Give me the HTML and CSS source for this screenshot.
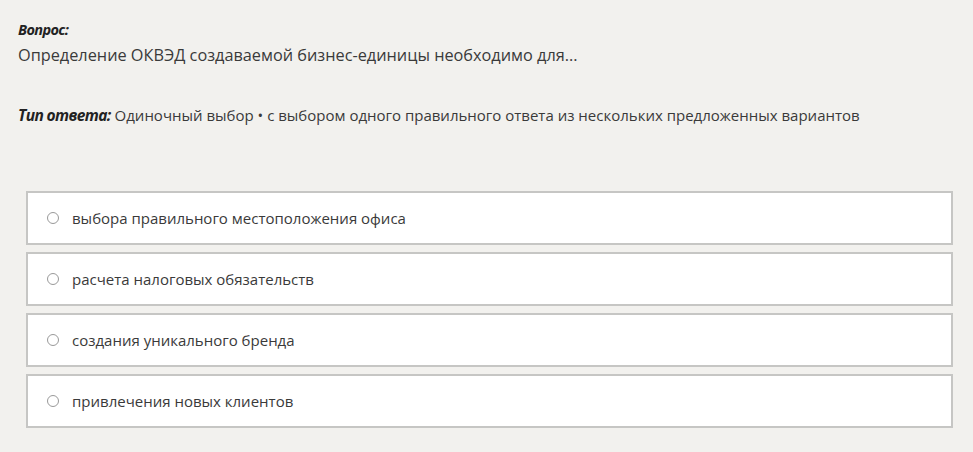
FILE: index.html
```html
<!DOCTYPE html>
<html>
<head>
    <meta charset="utf-8">
    <title>Вопрос</title>
    <link rel="stylesheet" href="styles.css">
</head>
<body>
    <div class="question">
        <div class="label">Вопрос:</div>
        <div class="question-text">Определение ОКВЭД создаваемой бизнес-единицы необходимо для...</div>

        <p class="answer-type"><span class="label">Тип ответа:</span> Одиночный выбор • с выбором одного правильного ответа из нескольких предложенных вариантов</p>

        <div class="options">
            <label class="option"><span class="radio"></span>выбора правильного местоположения офиса</label>
            <label class="option"><span class="radio"></span>расчета налоговых обязательств</label>
            <label class="option"><span class="radio"></span>создания уникального бренда</label>
            <label class="option"><span class="radio"></span>привлечения новых клиентов</label>
        </div>
    </div>
</body>
</html>
```

FILE: styles.css
```css
body { margin: 0; background: #f2f1ee; font-family: "Open Sans", "Noto Sans", sans-serif; color: #3a3a3a; }
.question { padding: 20px 20px 0 18px; }
.label { font-weight: bold; font-style: italic; font-size: 14.5px; color: #222; letter-spacing: -0.6px; }
.question-text { font-size: 16.3px; margin-top: 5px; }
.answer-type { font-size: 15px; margin: 38px 0 0; }
.answer-type .label { font-size: 15.5px; }
.options { margin: 65px 0 0 8px; display: flex; flex-direction: column; gap: 7px; }
.option { display: flex; align-items: center; height: 50px; background: #fff; border: 2px solid #c6c6c4; padding-left: 19px; font-size: 15px; }
.radio { width: 10px; height: 10px; border: 1.5px solid #999; border-radius: 50%; margin-right: 13px; }
```
